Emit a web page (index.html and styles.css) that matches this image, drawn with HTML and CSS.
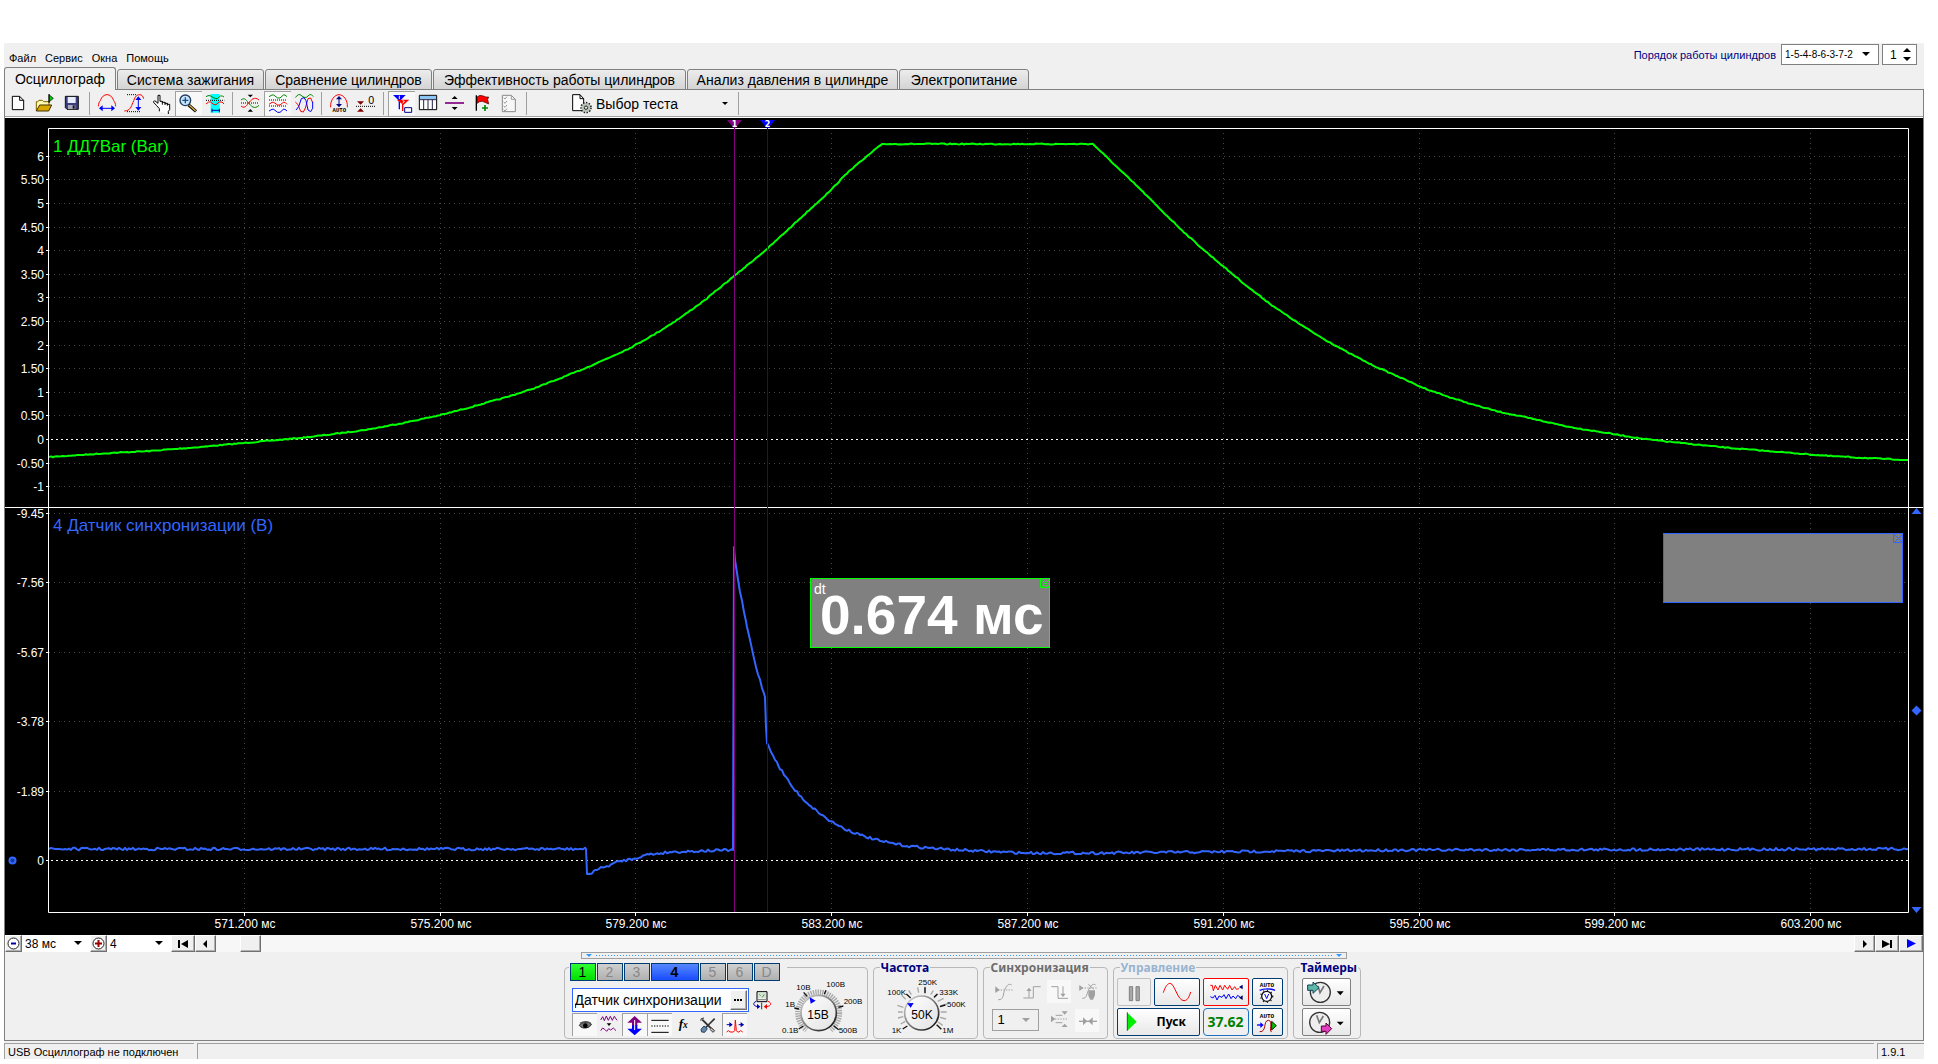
FILE: index.html
```html
<!DOCTYPE html>
<html lang="ru">
<head>
<meta charset="utf-8">
<title>USB Осциллограф</title>
<link rel="stylesheet" href="styles.css">
</head>
<body>
<div class="app">
  <header class="header">
    <nav class="menu">
      <a href="#file">Файл</a><a href="#service">Сервис</a><a href="#windows">Окна</a><a href="#help">Помощь</a>
    </nav>
    <div class="order">
      <label for="order">Порядок работы цилиндров</label>
      <span class="combo order-combo">
        <select id="order"><option>1-5-4-8-6-3-7-2</option></select>
        <svg class="arrow" width="8" height="5" viewBox="0 0 8 5"><path d="M0 0h8L4 4z"/></svg>
      </span>
      <span class="combo spin">
        <input type="text" value="1" aria-label="Номер цилиндра">
        <svg class="arrow" width="8" height="14" viewBox="0 0 8 14"><path d="M4 0l4 4H0zM0 9h8l-4 4z"/></svg>
      </span>
    </div>
  </header>

  <div class="tabs" role="tablist">
    <button class="tab tab-active" role="tab" aria-selected="true">Осциллограф</button>
    <button class="tab tab-ignition" role="tab">Система зажигания</button>
    <button class="tab tab-compare" role="tab">Сравнение цилиндров</button>
    <button class="tab tab-efficiency" role="tab">Эффективность работы цилиндров</button>
    <button class="tab tab-pressure" role="tab">Анализ давления в цилиндре</button>
    <button class="tab tab-power" role="tab">Электропитание</button>
  </div>

  <main class="sheet">
    <div class="toolbar">
      <button class="tool" aria-label="Новый"><svg viewBox="15 153 81 72"><path d="M37 169h22l12 12v28H37z" fill="#fff" stroke="#000" stroke-width="3"/><path d="M59 169v12h12" fill="none" stroke="#000" stroke-width="3"/></svg></button>
      <button class="tool" aria-label="Открыть"><svg viewBox="96 153 81 72"><path d="M109 213v-28h4l4-4h10l4 4h16v10" fill="#fffbb0" stroke="#806000" stroke-width="3"/><path d="M109 213l10-18h36l-9 18z" fill="#d8a800" stroke="#403000" stroke-width="3"/><path d="M147 164l13 11-13 11z" fill="#0c0" stroke="#000" stroke-width="2"/><path d="M147 162v27" stroke="#000" stroke-width="3"/></svg></button>
      <button class="tool" aria-label="Сохранить"><svg viewBox="177 153 81 72"><path d="M196 169h39v39h-34l-5-5z" fill="#3a3f7c" stroke="#111" stroke-width="3"/><path d="M203 171h24v18h-24z" fill="#e8ecff"/><path d="M204 195h22v12h-22z" fill="#aab"/><path d="M218 196h6v10h-6z" fill="#113"/></svg></button>
      <span class="sep"></span>
      <button class="tool" aria-label="Растянуть по времени"><svg viewBox="282 153 81 72"><path d="M295 199c0-8 3-14 6-17 4-12 12-18 20-18s16 6 20 18c3 3 6 9 6 17" fill="none" stroke="#f00" stroke-width="3"/><path d="M300 205h42" stroke="#00f" stroke-width="3"/><path d="M308 196v18l-11-9zM334 196v18l11-9z" fill="#00f"/></svg></button>
      <button class="tool" aria-label="Растянуть по амплитуде"><svg viewBox="363 153 81 72"><path d="M381 164h30M381 215h42" stroke="#000" stroke-width="3" stroke-dasharray="3 3"/><path d="M373 213c18-1 20-12 26-26s8-23 20-23c6 0 10 4 12 12" fill="none" stroke="#f00" stroke-width="3"/><path d="M415 174v32" stroke="#00f" stroke-width="3"/><path d="M406 180h18l-9-11zM406 201h18l-9 11z" fill="#00f"/></svg></button>
      <button class="tool" aria-label="Рука"><svg viewBox="444 153 81 72"><path d="M478 214v-8l-8-9-10-11 4-4 10 8v-24h6v18h7v3h8v3h7v3h7v16l-4 5v8" fill="#fff" stroke="#000" stroke-width="3"/><path d="M487 184v10M495 187v8M502 190v7" stroke="#000" stroke-width="3"/></svg></button>
      <button class="tool pressed" aria-label="Лупа"><svg viewBox="525 153 81 72"><path d="M566 195l22 19" stroke="#000" stroke-width="9"/><path d="M568 196l19 17" stroke="#e0b040" stroke-width="4"/><circle cx="556" cy="181" r="16" fill="#c4e4fa" stroke="#223a5c" stroke-width="4"/><path d="M547 181h18M556 172v18" stroke="#1b4b8f" stroke-width="4"/></svg></button>
      <button class="tool" aria-label="Окно просмотра"><svg viewBox="606 153 81 72"><path d="M632 162h27v56h-27z" fill="#0ff"/><path d="M618 170l6-3h6l12 7 10 2 9-8h6l5 3" fill="none" stroke="#080" stroke-width="3"/><path d="M618 181h55" stroke="#000" stroke-width="3" stroke-dasharray="3 3"/><path d="M618 192l8-6h6l10 8h6l10-8h8l6 6" fill="none" stroke="#f00" stroke-width="3"/><path d="M636 206v11M658 206v11M636 211h22" stroke="#00a" stroke-width="3"/></svg></button>
      <span class="sep"></span>
      <button class="tool" aria-label="Совместить"><svg viewBox="711 153 81 72"><path d="M723 189h54" stroke="#000" stroke-width="3" stroke-dasharray="3 3"/><path d="M723 180c10-8 14-2 22 8s18 22 32 8" fill="none" stroke="#080" stroke-width="3"/><path d="M723 198c10 8 14 2 22-8s18-22 32-10" fill="none" stroke="#f00" stroke-width="3"/><path d="M743 164h16l-8 8zM743 215h16l-8-8z"/></svg></button>
      <button class="tool pressed" aria-label="Разнести"><svg viewBox="792 153 81 72"><path d="M807 180h54M807 198h54" stroke="#000" stroke-width="3" stroke-dasharray="3 3"/><path d="M807 170l9-5h5l12 9h7l10-9h5l6 5" fill="none" stroke="#080" stroke-width="3"/><path d="M807 193l9-6h5l12 8h7l10-8h5l6 6" fill="none" stroke="#f00" stroke-width="3"/><path d="M807 213l9-5h5l12 9h7l10-9h5l6 5" fill="none" stroke="#00f" stroke-width="3"/></svg></button>
      <button class="tool" aria-label="Наложить"><svg viewBox="873 153 81 72"><path d="M886 172l9-8h5l12 8h7l10-8h5l6 6" fill="none" stroke="#080" stroke-width="3"/><path d="M886 186l8 8 8 20 8 2 6-12 8-28 8-2 6 14" fill="none" stroke="#f00" stroke-width="3"/><path d="M888 210l8-10 8-24 8-3 6 9 6 28 8 5 6-10v-20" fill="none" stroke="#00f" stroke-width="3"/></svg></button>
      <span class="sep"></span>
      <button class="tool" aria-label="Автомасштаб"><svg viewBox="978 153 81 72"><path d="M992 202c-2-22 12-38 25-38s27 16 25 38" fill="none" stroke="#f00" stroke-width="3"/><path d="M1017 172v24" stroke="#008" stroke-width="3"/><path d="M1008 178h18l-9-10zM1008 192h18l-9 10z" fill="#008"/><text x="1018" y="216" class="pix" text-anchor="middle">AUTO</text></svg></button>
      <button class="tool" aria-label="Установить ноль"><svg viewBox="1059 153 81 72"><path d="M1068 199h57" stroke="#000" stroke-width="3" stroke-dasharray="3 3"/><path d="M1071 184h21l-10 10zM1071 215h21l-10-10z" fill="#800000"/><text x="1105" y="192" font-size="32">0</text></svg></button>
      <span class="sep"></span>
      <button class="tool pressed" aria-label="Маркеры"><svg viewBox="24 153 81 72"><path d="M39 165h38l-18 19z" fill="#00f"/><path d="M58 182v26" stroke="#00f" stroke-width="4"/><path d="M50 179h38l-18 16z" fill="#f00"/><path d="M68 190v23" stroke="#f00" stroke-width="4"/><path d="M58 167v10M68 182l5 2-5 6" fill="none" stroke="#fff" stroke-width="3"/><path d="M74 203h21v14H74z" fill="#fff" stroke="#008" stroke-width="3"/></svg></button>
      <button class="tool" aria-label="Таблица"><svg viewBox="105 153 81 72"><path d="M118 166h52v43h-52z" fill="#fff" stroke="#000" stroke-width="3"/><path d="M120 168h48v9h-48z" fill="#8cc4f4"/><path d="M118 179h52M131 179v30M144 179v30M157 179v30" stroke="#224" stroke-width="3"/></svg></button>
      <button class="tool" aria-label="Линия уровня"><svg viewBox="186 153 81 72"><path d="M195 189h57" stroke="#800080" stroke-width="5"/><path d="M215 177h18l-9-9zM215 201h18l-9 9z"/></svg></button>
      <button class="tool" aria-label="Добавить метку"><svg viewBox="267 153 81 72"><path d="M289 166v46" stroke="#000" stroke-width="4"/><path d="M291 171l9-5 10 2 8 3h8l-3 7 3 14-9-4-10-4-8 1-8 5z" fill="#f00" stroke="#400" stroke-width="2"/><path d="M306 204h18M315 195v18" stroke="#080" stroke-width="5"/></svg></button>
      <button class="tool" aria-label="Отчёт"><svg viewBox="348 153 81 72"><path d="M367 166h27l12 12v37h-39z" fill="#f7f7f7" stroke="#888" stroke-width="3"/><path d="M394 166v12h12M371 173l4 4 6-7M371 186l4 4 6-7M371 198l4 4 6-7M371 209l4 4 6-7" fill="none" stroke="#999" stroke-width="3"/></svg></button>
      <span class="sep"></span>
      <button class="test">
        <svg width="21" height="20" viewBox="575 158 63 60"><path d="M577 160h22l11 12v36h-33z" fill="#fff" stroke="#000" stroke-width="3"/><path d="M599 160v12h11" fill="none" stroke="#000" stroke-width="3"/><circle cx="617" cy="199" r="14" fill="#a8b4a8" stroke="#222" stroke-width="7" stroke-dasharray="4 4"/><circle cx="617" cy="199" r="13" fill="#b8c4b8"/><circle cx="617" cy="199" r="5" fill="#eee" stroke="#222" stroke-width="3"/></svg>
        <span>Выбор теста</span>
        <svg class="test-arrow" width="6" height="3" viewBox="0 0 6 3"><path d="M0 0h6L3 3z"/></svg>
      </button>
      <span class="sep"></span>
    </div>

    <svg class="scope" viewBox="5 118 1918 817" role="img" aria-label="Осциллограммы">
      <rect x="5" y="118" width="1918" height="817" fill="#000"/>
      <g id="grid" class="grid"></g>
      <path class="zero" d="M51 439.5H1908M51 860.5H1908"/>
      <path id="trace1" class="trace" stroke="#00ff00"/>
      <path id="trace4" class="trace" stroke="#3366ff"/>
      <path class="frame" d="M48.5 912.5V128.5H1908.5V912.5zM5 507.5H1923"/>
      <path id="ticks" class="frame"/>
      <g class="cursors">
        <path d="M734.5 128V912" stroke="#800080"/><path d="M727 120h15l-7.5 9z" fill="#800080"/>
        <path d="M767.5 128V912" stroke="#0000ff"/><path d="M760 120h15l-7.5 9z" fill="#0000ff"/>
        <text x="734.5" y="127">1</text><text x="767.5" y="127">2</text>
      </g>
      <g class="axis axis-y">
        <text x="44" y="161">6</text><text x="44" y="184">5.50</text><text x="44" y="208">5</text><text x="44" y="232">4.50</text><text x="44" y="255">4</text><text x="44" y="279">3.50</text><text x="44" y="302">3</text><text x="44" y="326">2.50</text><text x="44" y="350">2</text><text x="44" y="373">1.50</text><text x="44" y="397">1</text><text x="44" y="420">0.50</text><text x="44" y="444">0</text><text x="44" y="468">-0.50</text><text x="44" y="491">-1</text>
        <text x="44" y="518">-9.45</text><text x="44" y="587">-7.56</text><text x="44" y="657">-5.67</text><text x="44" y="726">-3.78</text><text x="44" y="796">-1.89</text><text x="44" y="865">0</text>
      </g>
      <g class="axis axis-x">
        <text x="245" y="928">571.200 мс</text><text x="441" y="928">575.200 мс</text><text x="636" y="928">579.200 мс</text><text x="832" y="928">583.200 мс</text><text x="1028" y="928">587.200 мс</text><text x="1224" y="928">591.200 мс</text><text x="1420" y="928">595.200 мс</text><text x="1615" y="928">599.200 мс</text><text x="1811" y="928">603.200 мс</text>
      </g>
      <text class="channel-title" x="53" y="152" fill="#00ff00">1 ДД7Bar (Bar)</text>
      <text class="channel-title" x="53" y="531" fill="#3366ff">4 Датчик синхронизации (В)</text>
      <g fill="#808080" stroke="#3366ff"><rect x="1663.5" y="533.5" width="239" height="69"/><path d="M1893.5 533.5h9v9h-9zM1894 534l9 9M1903 534l-9 9"/></g>
      <g fill="#808080" stroke="#00ff00"><rect x="810.5" y="578.5" width="239" height="69"/><path d="M1040.5 578.5h9v9h-9zM1041 579l9 9M1050 579l-9 9"/></g>
      <text x="814" y="594" font-size="14" fill="#fff">dt</text>
      <text class="reading" x="820" y="634">0.674 мс</text>
      <path fill="#3366ff" d="M1911.5 514h10l-5-6zM1911.5 710.5l5-5 5 5-5 5zM1911.5 907h10l-5 6z"/>
      <circle cx="12.500" cy="860.500" r="4" fill="#3366ff"/><circle cx="12.500" cy="860.500" r="2" fill="#123a9a"/>
    </svg>

    <div class="scrollrow">
      <button class="raised zoombtn" aria-label="Уменьшить"><svg width="13" height="13" viewBox="0 0 13 13"><circle cx="6.500" cy="6.500" r="5.500" fill="#fff" stroke="#222"/><path d="M4 6.500h5" stroke="#00a" stroke-width="2"/></svg></button>
      <span class="combo time-combo"><select aria-label="Развёртка"><option>38 мс</option></select><svg class="arrow" width="8" height="5" viewBox="0 0 8 5"><path d="M0 0h8L4 4z"/></svg></span>
      <button class="raised zoombtn" aria-label="Увеличить"><svg width="13" height="13" viewBox="0 0 13 13"><circle cx="6.500" cy="6.500" r="5.500" fill="#fff" stroke="#222"/><path d="M3 6.500h7M6.500 3v7" stroke="#900" stroke-width="2"/></svg></button>
      <span class="combo scale-combo"><select aria-label="Масштаб"><option>4</option></select><svg class="arrow" width="8" height="5" viewBox="0 0 8 5"><path d="M0 0h8L4 4z"/></svg></span>
      <button class="raised nav-wide" aria-label="В начало"><svg width="11" height="8" viewBox="0 0 11 8"><path d="M0 0h2v8H0zM10 0v8L3 4z"/></svg></button>
      <button class="raised nav-step" aria-label="Назад"><svg width="5" height="8" viewBox="0 0 5 8"><path d="M4 0v8L0 4z"/></svg></button>
      <div class="trough"><span class="raised thumb"></span></div>
      <button class="raised nav-step" aria-label="Вперёд"><svg width="5" height="8" viewBox="0 0 5 8"><path d="M1 0v8l4-4z"/></svg></button>
      <button class="raised nav-wide" aria-label="В конец"><svg width="11" height="8" viewBox="0 0 11 8"><path d="M8 0h2v8H8zM0 0v8l8-4z"/></svg></button>
      <button class="raised nav-wide" aria-label="Воспроизвести"><svg width="9" height="10" viewBox="0 0 9 10"><path d="M0 0v9l9-4.500z" fill="#00f"/></svg></button>
    </div>

    <div class="bottom">
    <div class="slider"><i></i><span></span><i></i></div>

    <div class="panels">
      <fieldset class="group channel-group">
        <legend class="channels">
          <button class="ch ch-1">1</button><button class="ch">2</button><button class="ch">3</button><button class="ch ch-4">4</button><button class="ch">5</button><button class="ch">6</button><button class="ch">D</button>
        </legend>
        <div class="channel-body">
          <div class="channel-left">
            <div class="name-row">
              <span class="name-box"><input type="text" value="Датчик синхронизации" aria-label="Имя канала"><button class="raised dots" aria-label="Выбрать"><svg width="8" height="2" viewBox="0 0 8 2"><path d="M0 0h2v2H0zM3 0h2v2H3zM6 0h2v2H6z"/></svg></button></span>
              <svg width="20" height="20" viewBox="578 132 60 60"><path d="M590 137h30v30h-30z" fill="#eee" stroke="#000" stroke-width="3"/><path d="M593 140h24v16h-24z" fill="#cfe8cf"/><path d="M593 161h24M597 145l4 4M612 145l-6 9" stroke="#444" stroke-width="2"/><path d="M604 170v20" stroke="#333" stroke-width="3"/><path d="M588 166c-12 4-10 14 4 16" fill="none" stroke="#00a" stroke-width="3"/><path d="M590 174l10 8-10 7z" fill="#00a"/><path d="M623 166c12 4 10 14-4 16" fill="none" stroke="#f00" stroke-width="3"/><path d="M620 174l-10 8 10 7z" fill="#f00"/></svg>
            </div>
            <div class="icon-row">
              <button class="tool small pressed" aria-label="Видимость"><svg viewBox="40 205 75 69"><path d="M62 242c6-10 26-14 36-4-2 12-28 18-36 4z" fill="#777" stroke="#222" stroke-width="3"/><circle cx="80" cy="243" r="7"/><path d="M64 236c10-6 22-7 32 0" fill="none" stroke="#555" stroke-width="4"/></svg></button>
              <button class="tool small" aria-label="Фильтр"><svg viewBox="115 205 75 69"><path d="M126 226l6-10 5 12 6-14 6 13 6-12 6 12 6-12 8 12M126 258l6-8 6 4 6 6 6-8 6 4 8-6 8 8" fill="none" stroke="#800080" stroke-width="3"/><path d="M144 236h14l-7 8z"/></svg></button>
              <button class="tool small pressed" aria-label="Инвертировать"><svg viewBox="190 205 75 69"><path d="M228 214l22 20h-14v10h-16v-10h-14z" fill="#800080"/><path d="M228 272l22-20h-14v-10h-16v10h-14z" fill="#00f"/><path d="M228 226v30" stroke="#fff" stroke-width="3"/></svg></button>
              <button class="tool small pressed" aria-label="Связь по входу"><svg viewBox="265 205 75 69"><path d="M278 227h52M278 263h52" stroke="#000" stroke-width="3"/><path d="M278 244h52" stroke="#000" stroke-width="3" stroke-dasharray="4 4"/></svg></button>
              <button class="tool small" aria-label="Функция"><svg viewBox="340 205 75 69"><text x="360" y="250" class="fx">f<tspan font-size="28">x</tspan></text></svg></button>
              <button class="tool small" aria-label="Настройка"><svg viewBox="415 205 75 69"><path d="M430 224l34 34" stroke="#333" stroke-width="6"/><path d="M426 228l2-6 8-2M458 250l10 8-5 5-9-9" stroke="#333" fill="#ccc" stroke-width="3"/><path d="M468 222l-28 28" stroke="#333" stroke-width="5"/><path d="M436 244l10 8-8 11-9-1-2-8z" fill="#68a" stroke="#246" stroke-width="3"/></svg></button>
              <button class="tool small pressed" aria-label="Курсор"><svg viewBox="490 205 75 69"><path d="M504 240h14M540 240h14" stroke="#00a" stroke-width="3"/><path d="M512 232v16l10-8zM546 232l10 8-10 8z" fill="#00a"/><path d="M504 262l5-4 5 4h10l4-4 2-32 3 32 4 4h4l5-4 6 4" fill="none" stroke="#f00" stroke-width="3"/></svg></button>
            </div>
          </div>
          <svg class="knob" width="84" height="62" viewBox="660 92 252 186">
            <circle cx="776" cy="203" r="62" fill="none" stroke="#a8a8a8" stroke-width="17" stroke-dasharray="4 3"/>
            <path d="M714 290l62-87 62 87z" fill="#efefef"/>
            <path d="M731 141l10 12M798 135l-5 11M703 188l14 3M850 182l-15 4M716 251l14-9M836 253l-15-12" stroke="#111" stroke-width="4"/>
            <circle cx="776" cy="203" r="53" fill="url(#dial)" stroke="url(#rim)" stroke-width="5"/>
            <path d="M749 156l18 10-15 9z" fill="#00f"/>
            <text x="774" y="222" font-size="36" text-anchor="middle">15В</text>
            <g class="dial-labels"><text x="709" y="134">10В</text><text x="799" y="125">100В</text><text x="676" y="186">1В</text><text x="851" y="176">200В</text><text x="666" y="263">0.1В</text><text x="836" y="263">500В</text></g>
          </svg>
        </div>
      </fieldset>

      <fieldset class="group freq-group">
        <legend>Частота</legend>
        <svg class="knob" width="84" height="62" viewBox="44 92 252 186">
          <path d="M109 162l-12-12M126 148l-8-13M148 142l-3-16M167 142v-18M184 148l8-12M194 158l12-12M205 168l18-9M212 182l22-6M214 200h18M212 216l18 5M206 230l14 10M102 186l-18-6M100 200H86M102 214l-16 4M108 228l-14 8" stroke="#a8a8a8" stroke-width="4"/>
          <path d="M167 144v-18M124 158l-13-12M194 156l10-10M212 184l16-5M114 242l-14 9M202 238l14 14" stroke="#111" stroke-width="4"/>
          <circle cx="157" cy="203" r="51" fill="url(#dial)" stroke="url(#rim)" stroke-width="5"/>
          <path d="M113 174l20-1-9 14z" fill="#00f"/>
          <text x="158" y="221" font-size="36" text-anchor="middle">50K</text>
          <g class="dial-labels"><text x="147" y="119">250K</text><text x="54" y="150">100K</text><text x="210" y="150">333K</text><text x="233" y="186">500K</text><text x="67" y="263">1K</text><text x="219" y="262">1M</text></g>
          <defs>
            <linearGradient id="dial" x1="0" y1="0" x2="1" y2="1"><stop offset="0" stop-color="#fff"/><stop offset="1" stop-color="#e2e2e2"/></linearGradient>
            <linearGradient id="rim" x1="0" y1="0" x2="1" y2="1"><stop offset="0" stop-color="#ddd"/><stop offset=".5" stop-color="#777"/><stop offset="1" stop-color="#000"/></linearGradient>
          </defs>
        </svg>
      </fieldset>

      <fieldset class="group sync-group" disabled>
        <legend>Синхронизация</legend>
        <div class="sync-grid">
          <button class="sync" aria-label="Нет"><svg viewBox="362 103 72 69"><path d="M375 133h52" stroke-dasharray="4 4"/><path d="M384 162c18 2 14-22 20-32s10-18 20-12"/><path class="fill" d="M375 122v20l13-9z"/></svg></button>
          <button class="sync" aria-label="Фронт"><svg viewBox="446 103 72 69"><path d="M459 157h30v-34h22M476 156v-26"/><path class="fill" d="M468 136h16l-8-10z"/></svg></button>
          <button class="sync sync-on" aria-label="Спад"><svg viewBox="534 103 72 69"><path d="M547 123h20v35h30M582 122v24"/><path class="fill" d="M574 144h16l-8 10z"/></svg></button>
          <button class="sync" aria-label="Цилиндр"><svg viewBox="614 103 72 69"><path d="M627 127h56" stroke-dasharray="4 4"/><path d="M636 158c14 2 14-18 20-28s10-18 20-12M654 116l16 14"/><path class="fill" d="M627 118v18l12-9zM654 134h20v14l-6 14h-8l-6-12z"/></svg></button>
          <span class="combo sync-combo"><select aria-label="Канал синхронизации"><option>1</option></select><svg class="arrow" width="8" height="5" viewBox="0 0 8 5"><path d="M0 0h8L4 4z"/></svg></span>
          <button class="sync" aria-label="Уровень"><svg viewBox="534 189 72 69"><path d="M560 208h20M560 230h20" /><path d="M558 219h38" stroke-dasharray="4 4"/><path class="fill" d="M546 209v20l13-10zM578 196h18l-9 10zM578 243h18l-9-10z"/></svg></button>
          <button class="sync sync-on" aria-label="По центру"><svg viewBox="618 189 72 69"><path d="M630 226h54" stroke-width="4"/><path class="fill" d="M642 214l13 12-13 12zM671 214l-13 12 13 12z"/></svg></button>
        </div>
      </fieldset>

      <fieldset class="group control-group">
        <legend class="pale">Управление</legend>
        <div class="control-grid">
          <button class="xp xp-off" aria-label="Пауза"><svg width="30" height="26" viewBox="22 101 90 78"><path d="M53 124h10v42H53zM73 124h10v42H73z" fill="#a8a8a8" stroke="#808080" stroke-width="3"/></svg></button>
          <button class="xp" aria-label="Сигнал"><svg width="42" height="26" viewBox="134 101 126 78"><path d="M156 142c6-20 14-28 20-28 14 0 22 52 42 52 8 0 14-6 20-26" fill="none" stroke="#f00" stroke-width="3"/></svg></button>
          <button class="xp xp-red" aria-label="Режим самописца"><svg width="42" height="26" viewBox="280 101 126 78"><path d="M296 120h6l3 16 6-16 8 14 6-14 8 14 6-14 9 12 6-12 7 14 8-10 5 8 8-2" fill="none" stroke="#f00" stroke-width="3"/><path d="M296 154l8 4 6-8 6 14 6-12 9 4 6-8 6 12 8-14 7 14 6-8 8 8 6-10 8 6" fill="none" stroke="#00f" stroke-width="3"/><path d="M393 118v14l-11-7zM393 150v14l-11-7z" fill="#006"/></svg></button>
          <button class="xp" aria-label="Автонастройка"><svg width="28" height="26" viewBox="428 101 84 78"><text x="470" y="125" class="auto" text-anchor="middle">AUTO</text><path d="M448 135c12-6 34-6 46 0" fill="none" stroke="#00f" stroke-width="4"/><circle cx="469" cy="153" r="15" fill="#fff" stroke="#111" stroke-width="4"/><circle cx="469" cy="153" r="18" fill="none" stroke="#111" stroke-width="4" stroke-dasharray="3 9"/><path d="M463 146l6 14 6-14" fill="none" stroke="#00f" stroke-width="3"/></svg></button>
          <button class="xp start"><svg width="12" height="22" viewBox="46 200 36 66"><path d="M50 205v54l28-27z" fill="#0e0" /><path d="M50 204v55" stroke="#444" stroke-width="3"/></svg><span>Пуск</span></button>
          <output class="xp counter">37.62</output>
          <button class="xp" aria-label="Автозапуск"><svg width="28" height="26" viewBox="428 191 84 78"><text x="470" y="217" class="auto" text-anchor="middle">AUTO</text><path d="M440 239h14" stroke="#00f" stroke-width="4"/><path d="M450 231l10 8-10 9z" fill="#00f"/><path d="M448 259c22 2 10-34 26-34s0 36 10 34" fill="none" stroke="#a00" stroke-width="3"/><path d="M484 228v26l14-13z" fill="#0c0" stroke="#111" stroke-width="3"/></svg></button>
        </div>
      </fieldset>

      <fieldset class="group timer-group">
        <legend>Таймеры</legend>
        <div class="timer-col">
          <button class="xp timer" aria-label="Таймер запуска"><svg width="45" height="26" viewBox="580 101 135 78"><circle cx="629" cy="141" r="30" fill="#eee" stroke="#333" stroke-width="4"/><path d="M622 122l6 20 12-20" fill="none" stroke="#777" stroke-width="5"/><path d="M591 119h16v-9l18 17-18 17v-9h-16z" fill="#5cb8a8" stroke="#145" stroke-width="3"/><path d="M678 138h21l-10 12z"/></svg></button>
          <button class="xp timer" aria-label="Таймер остановки"><svg width="45" height="26" viewBox="580 191 135 78"><circle cx="627" cy="231" r="30" fill="#eee" stroke="#333" stroke-width="4"/><path d="M618 210l8 22 12-20" fill="none" stroke="#777" stroke-width="5"/><path d="M632 242h14v-9l17 17-17 17v-9h-14z" fill="#e040c0" stroke="#503" stroke-width="3"/><path d="M678 229h21l-10 11z"/></svg></button>
        </div>
      </fieldset>
    </div>
    </div>
  </main>

  <footer class="status">
    <div class="cell cell-state">USB Осциллограф не подключен</div>
    <div class="cell cell-fill"></div>
    <div class="cell cell-version">1.9.1</div>
  </footer>
</div>
<script src="scope.js"></script>
</body>
</html>
```
FILE: styles.css
```css
* { box-sizing: border-box; }
body { margin: 0; padding: 43px 14px 0 4px; background: #fff; color: #000; font: 11px/14px "Liberation Sans", Arial, sans-serif; }
button, input, select { font: inherit; color: inherit; margin: 0; padding: 0; border: 0; background: none; border-radius: 0; appearance: none; }
svg { display: block; }
.app { background: #f0f0f0; }

.header { display: flex; justify-content: space-between; align-items: flex-start; height: 24px; }
.menu { display: flex; gap: 9px; padding: 8px 0 0 5px; }
.menu a { color: #000; text-decoration: none; }
.order { display: flex; align-items: center; padding: 1px 7px 0 0; color: #000080; }
.order label { margin-right: 5px; }
.combo { display: grid; align-items: center; color: #000; background: #fff; }
.combo > * { grid-area: 1 / 1; }
.combo select, .combo input { width: 100%; height: 100%; padding-left: 3px; }
.arrow { justify-self: end; margin-right: 8px; pointer-events: none; }
.order-combo, .spin { border: 1px solid #808080; height: 21px; }
.order-combo { width: 98px; margin-right: 3px; font-size: 10px; }
.spin { width: 35px; font-size: 12px; }
.spin input { padding-left: 7px; }
.spin .arrow { margin-right: 5px; }

.tabs { display: flex; align-items: flex-end; gap: 1px; height: 23px; box-shadow: inset 0 -1px #808080; }
.tab { height: 21px; border: 1px solid #808080; border-radius: 3px 3px 0 0; background: linear-gradient(#ececec, #d4d4d4); font-size: 14px; line-height: 18px; white-space: nowrap; }
.tab-active { width: 112px; height: 23px; border-bottom: 0; background: #f0f0f0; }
.tab-ignition { width: 147px; }
.tab-compare { width: 167px; }
.tab-efficiency { width: 253px; }
.tab-pressure { width: 211px; }
.tab-power { width: 130px; }

.sheet { border: 1px solid #808080; border-top: 0; padding-bottom: 1px; }
.toolbar { display: flex; align-items: center; height: 28px; border-bottom: 1px solid #fff; box-shadow: inset 0 -1px #a0a0a0; }
.tool { width: 27px; height: 25px; padding: 0 0 1px; }
.tool svg { width: 27px; height: 24px; }
.small { width: 25px; height: 23px; padding: 0; }
.small svg { width: 25px; height: 23px; }
.pressed { background: #f8f8f8 content-box; box-shadow: inset 1px 1px #a0a0a0; }
.sep { width: 8px; height: 23px; background: linear-gradient(#a0a0a0, #a0a0a0) 3px 0 / 1px 100% no-repeat; }
.pix { font: bold 17px "Liberation Mono", monospace; }
.test { display: flex; align-items: center; width: 204px; height: 24px; padding: 0 7px 0 41px; font-size: 14px; }
.test span { margin-left: 3px; }
.test-arrow { margin-left: auto; }

.scope { width: 100%; height: auto; font-family: "Liberation Sans", Arial, sans-serif; }
.grid path { stroke: #484848; stroke-dasharray: 1 4; fill: none; }
.zero { stroke: #fff; stroke-dasharray: 2 3; }
.trace { fill: none; stroke-width: 2; stroke-linejoin: round; }
.frame { fill: none; stroke: #fff; }
.cursors text { fill: #fff; font: bold 8px "DejaVu Sans", sans-serif; text-anchor: middle; }
.axis { fill: #fff; font-size: 12px; }
.axis-y { text-anchor: end; }
.axis-x { text-anchor: middle; }
.channel-title { font-size: 17px; }
.reading { fill: #fff; font-size: 55px; font-weight: bold; }

.scrollrow { display: flex; height: 17px; font-size: 12px; }
.raised { display: flex; align-items: center; justify-content: center; background: #f0f0f0; border: 1px solid; border-color: #fff #707070 #707070 #fff; box-shadow: inset -1px -1px #b0b0b0; }
.zoombtn { width: 17px; }
.time-combo { width: 68px; }
.scale-combo { width: 64px; }
.nav-wide { width: 24px; }
.nav-step { width: 21px; }
.trough { flex: 1; padding-left: 24px; background: #f7f7f7; }
.thumb { width: 21px; height: 17px; }

.slider { display: flex; align-items: center; gap: 4px; width: 766px; height: 7px; margin: 0 auto; padding: 0 4px; border: 1px solid #a0a0a0; }
.slider i { width: 6px; height: 3px; background: #3399ff; clip-path: polygon(0 0, 100% 0, 50% 100%); }
.slider span { flex: 1; height: 1px; background: repeating-linear-gradient(90deg, #3399ff 0 1px, transparent 1px 3px); }

.panels { display: flex; justify-content: center; gap: 5px; padding: 2px 4px 0 0; }
.group { min-width: 0; height: 78px; margin: 0; padding: 0; border: 1px solid #b8b8b8; border-radius: 4px; }
.group legend { height: 13px; margin-left: 6px; padding: 0 1px; color: #000080; font: bold 12px/13px "Noto Sans", Tahoma, sans-serif; }
.group .pale { color: #99b4d1; }
.channel-group { width: 304px; }
.freq-group { width: 105px; }
.sync-group { width: 125px; }
.control-group { width: 175px; }
.timer-group { width: 68px; }

.group .channels { display: flex; gap: 1px; margin-left: 4px; padding: 2px 7px 0 1px; }
.ch { width: 26px; height: 18px; border: 1px solid #003c74; background: linear-gradient(#d0d0d0, #b0b0b0); color: #888; font: 14px/16px "Liberation Sans", Arial, sans-serif; }
.ch-1 { background: linear-gradient(#30ff30, #00e000); color: #000; }
.ch-4 { width: 48px; background: linear-gradient(#5588ff, #1a4cff); color: #000; font-weight: bold; }
.channel-body { display: flex; padding: 14px 0 0 7px; }
.channel-left { width: 208px; }
.name-row { display: flex; align-items: center; gap: 4px; }
.name-box { display: flex; width: 177px; height: 24px; padding: 1px; border: 1px solid #3366ff; background: #fff; }
.name-box input { flex: 1; min-width: 0; padding-left: 1px; font-size: 14px; }
.dots { width: 17px; }
.icon-row { display: flex; margin-top: 1px; }
.fx { font: italic bold 40px "Liberation Serif", serif; }
.channel-body .knob { margin-top: -12px; }
.freq-group .knob { margin: 2px 0 0 10px; }
.knob { font-family: "Liberation Sans", Arial, sans-serif; }
.dial-labels { font-size: 24px; }

.sync-group legend { color: #6d6d6d; }
.sync-grid { display: grid; grid-template-columns: repeat(4, 24px); column-gap: 4px; row-gap: 6px; padding: 6px 0 0 7px; }
.sync { width: 24px; height: 23px; }
.sync svg { width: 24px; height: 23px; fill: none; stroke: #a0a0a0; stroke-width: 3; }
.sync .fill { fill: #a0a0a0; stroke: none; }
.sync-on { background: #f8f8f8; }
.sync-combo { grid-column: span 2; width: 47px; height: 22px; margin-left: 1px; border: 1px solid #a0a0a0; background: #f0f0f0; font-size: 13px; }
.sync-combo .arrow { fill: #a0a0a0; }
.sync-combo select { padding-left: 5px; opacity: 1; }

.control-grid { display: grid; grid-template-columns: 34px 46px 46px 31px; gap: 2px 3px; padding: 4px 0 0 3px; }
.xp { display: flex; align-items: center; justify-content: center; height: 28px; border: 1px solid #003c74; border-radius: 2px; background: linear-gradient(#fff, #e8e8e8); }
.xp-off { border-color: #c0c0c0; background: #f0f0f0; }
.xp-red { border-color: #f00; }
.start { grid-column: span 2; justify-content: flex-start; padding-left: 8px; font: bold 12px/14px "Noto Sans", Tahoma, sans-serif; }
.start span { margin-left: 19px; }
.counter { border-color: #2070c0; border-radius: 4px; color: #008000; background: #f0f0f0; font: bold 14px/16px "Noto Sans", Tahoma, sans-serif; }
.auto { font: bold 18px "Liberation Mono", monospace; }
.timer-col { display: grid; gap: 2px; padding: 4px 0 0 8px; }
.timer { width: 49px; border-color: #808080; }

.status { display: flex; gap: 3px; padding-top: 2px; }
.cell { height: 16px; padding: 1px 3px; border: 1px solid #a0a0a0; border-width: 1px 0 0 1px; white-space: nowrap; }
.cell-state { width: 190px; }
.cell-fill { flex: 1; }
.cell-version { width: 47px; }
```
FILE: scope.js
```js
// Horizontal and vertical grid positions of the two channels
const rows1 = [156, 179, 203, 227, 250, 274, 297, 321, 345, 368, 392, 415, 463, 486];
const rows4 = [513, 582, 652, 721, 791];
const zeros = [439, 860];
const cols = [244, 440, 635, 831, 1027, 1223, 1419, 1614, 1810];

const svgNs = "http://www.w3.org/2000/svg";
const grid = document.getElementById("grid");
function line(d) {
  const p = document.createElementNS(svgNs, "path");
  p.setAttribute("d", d);
  grid.append(p);
}
rows1.concat(rows4).forEach(y => line(`M49 ${y + 0.5}H1908`));
cols.forEach(x => line(`M${x + 0.5} 133V507M${x + 0.5} 513V912`));

document.getElementById("ticks").setAttribute("d",
  rows1.concat(rows4, zeros).map(y => `M46 ${y + 0.5}h2`).join("") +
  cols.map(x => `M${x + 0.5} 913v3`).join(""));

const pressure = [[49,457],[80,455],[111,453],[150,451],[200,447],[244,443],[300,438],[334,434],[371,429],[408,422],[445,414],[482,404],[507,397],[532,389],[556,380],[581,370],[606,359],[630,348],[655,334],[680,318],[705,300],[717,290],[733,277],[767,249],[793,225],[831,190],[849,171],[865,158],[882,144],[1093,144],[1120,170],[1137,186],[1162,211],[1187,235],[1205,251],[1224,267],[1248,287],[1273,306],[1298,323],[1322,338],[1347,352],[1372,365],[1397,376],[1421,387],[1446,396],[1471,404],[1496,411],[1533,419],[1570,427],[1607,433],[1644,439],[1681,443],[1730,448],[1780,452],[1829,456],[1866,458],[1908,460]];
const sync = [[49,849],[586,849],[587,874],[590,874],[595,870],[605,867],[620,861],[633,859],[645,855],[670,852],[700,851],[733,850],[734,547],[735,560],[740,592],[747,627],[756,667],[765,697],[766,727],[767,743],[778,765],[793,788],[807,803],[827,819],[843,828],[860,835],[880,841],[907,846],[943,849],[977,851],[1027,853],[1100,853],[1200,852],[1400,850],[1908,849]];

let seed = 7;
function random() {
  seed = (seed * 16807) % 2147483647;
  return seed / 2147483647 - 0.5;
}
function trace(id, nodes, noise) {
  let d = `M${nodes[0][0]} ${nodes[0][1]}`;
  for (let i = 1; i < nodes.length; i++) {
    const [x0, y0] = nodes[i - 1];
    const [x1, y1] = nodes[i];
    for (let x = x0 + 2; x < x1; x += 2) {
      const y = y0 + (y1 - y0) * (x - x0) / (x1 - x0) + random() * noise;
      d += `L${x} ${y.toFixed(1)}`;
    }
    d += `L${x1} ${y1}`;
  }
  document.getElementById(id).setAttribute("d", d);
}
trace("trace1", pressure, 1);
trace("trace4", sync, 2.6);
```
